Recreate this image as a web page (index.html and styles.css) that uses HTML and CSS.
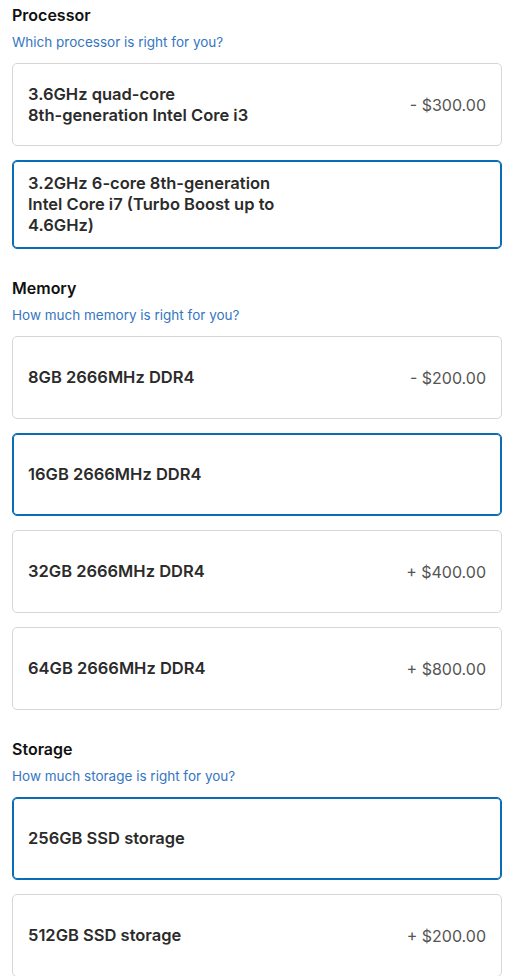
FILE: index.html
```html
<!DOCTYPE html>
<html lang="en">
<head>
    <meta charset="UTF-8">
    <meta name="viewport" content="width=device-width, initial-scale=1.0">
    <title>Configure</title>
    <link rel="stylesheet" href="styles.css">
</head>
<body>
    <div class="page">

        <!-- Processor -->
        <section class="group">
            <h2>Processor</h2>
            <a class="help" href="#">Which processor is right for you?</a>
            <div class="option">
                <span class="name">3.6GHz quad-core<br>8th-generation Intel Core i3</span>
                <span class="price">- $300.00</span>
            </div>
            <div class="option selected">
                <span class="name">3.2GHz 6-core 8th-generation<br>Intel Core i7 (Turbo Boost up to<br>4.6GHz)</span>
            </div>
        </section>

        <!-- Memory -->
        <section class="group">
            <h2>Memory</h2>
            <a class="help" href="#">How much memory is right for you?</a>
            <div class="option">
                <span class="name">8GB 2666MHz DDR4</span>
                <span class="price">- $200.00</span>
            </div>
            <div class="option selected">
                <span class="name">16GB 2666MHz DDR4</span>
            </div>
            <div class="option">
                <span class="name">32GB 2666MHz DDR4</span>
                <span class="price">+ $400.00</span>
            </div>
            <div class="option">
                <span class="name">64GB 2666MHz DDR4</span>
                <span class="price">+ $800.00</span>
            </div>
        </section>

        <!-- Storage -->
        <section class="group">
            <h2>Storage</h2>
            <a class="help" href="#">How much storage is right for you?</a>
            <div class="option selected">
                <span class="name">256GB SSD storage</span>
            </div>
            <div class="option">
                <span class="name">512GB SSD storage</span>
                <span class="price">+ $200.00</span>
            </div>
        </section>

    </div>
</body>
</html>
```

FILE: styles.css
```css
body {
    margin: 0;
    background: #fff;
    font-family: Inter, "Liberation Sans", sans-serif;
    color: #1d1d1f;
}

.page {
    padding: 5px 15px 0 12px;
}

.group {
    display: flex;
    flex-direction: column;
    gap: 14px;
    margin-bottom: 29px;
}

.group h2 {
    margin: 0 0 -7px;
    font-size: 16px;
    line-height: 20px;
    font-weight: 600;
    color: #111;
}

.help {
    margin-bottom: -3px;
    font-size: 13.5px;
    line-height: 20px;
    color: #3576c1;
    text-decoration: none;
}

.option {
    display: flex;
    align-items: center;
    justify-content: space-between;
    min-height: 83px;
    box-sizing: border-box;
    padding: 12px 15px;
    border: 1px solid #d6d6d6;
    border-radius: 5px;
}

.option.selected {
    border-color: #0a6cb5;
    box-shadow: inset 0 0 0 1px #0a6cb5;
}

.name {
    font-size: 16.5px;
    line-height: 21px;
    font-weight: 600;
    color: #2b2b2b;
}

.price {
    font-size: 16px;
    color: #555;
}
```
